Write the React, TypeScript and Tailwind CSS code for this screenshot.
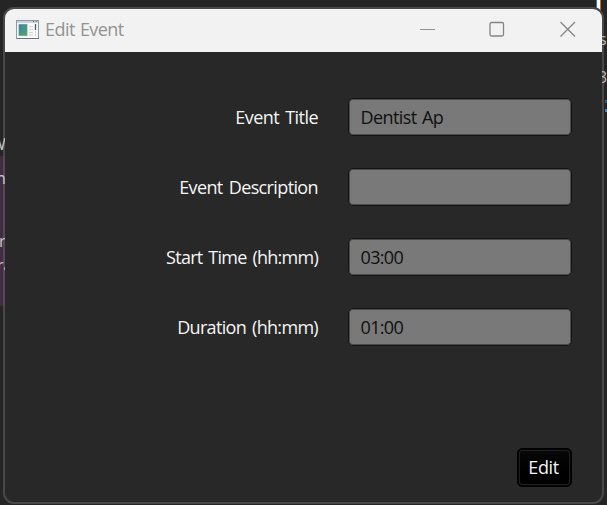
const fields = [
  { id: 'title', label: 'Event Title', value: 'Dentist Ap', tracking: 'tracking-[-0.55px]', valueTracking: 'tracking-[-0.6px] [word-spacing:1.5px]' },
  { id: 'description', label: 'Event Description', value: '', tracking: 'tracking-[-0.62px]', valueTracking: '' },
  { id: 'start', label: 'Start Time (hh:mm)', value: '03:00', tracking: 'tracking-[-0.75px]', valueTracking: 'tracking-[-0.65px]' },
  { id: 'duration', label: 'Duration (hh:mm)', value: '01:00', tracking: 'tracking-[-0.68px]', valueTracking: 'tracking-[-0.65px]' },
];

function AppIcon() {
  return (
    <svg width="24" height="20" viewBox="0 0 24 20" className="relative -top-px shrink-0">
      <defs>
        <linearGradient id="thumb" x1="0" y1="0" x2="1" y2="1">
          <stop offset="0" stopColor="#4479ae" />
          <stop offset="0.5" stopColor="#459688" />
          <stop offset="1" stopColor="#55a860" />
        </linearGradient>
      </defs>
      <rect x="0.5" y="0.5" width="22" height="18" fill="#f8f9fb" stroke="#8d99a8" />
      <rect x="1" y="1" width="21" height="2" fill="#cbd2da" />
      <path d="M17 1.5h1M19.5 1.5h1" stroke="#5c6875" />
      <path d="M1 18.5h22" stroke="#69727e" />
      <rect x="2.5" y="4" width="9" height="12" fill="url(#thumb)" stroke="#dce5e7" strokeWidth="0.5" />
      <path d="M13 6.5h4M13 9.5h4M13 12.5h4M13 15h4" stroke="#cfd2d6" />
      <path d="M19.5 4v6" stroke="#41655f" strokeWidth="1.3" />
      <path d="M19.5 11v5" stroke="#d8dadd" />
    </svg>
  );
}

function LeftEdge() {
  return (
    <div className="pointer-events-none absolute left-0 top-0 h-full w-[5px] overflow-hidden text-[16px] leading-4 text-[#c9c9c9]">
      <div className="absolute left-0 top-[156px] h-[150px] w-[5px] bg-[#412c42]" />
      <div className="absolute left-[3px] top-[156px] h-[150px] w-[2px] bg-[#55475a]" />
      <span className="absolute -left-[9px] top-[136px]">W</span>
      <span className="absolute -left-[4px] top-[170px]">n</span>
      <span className="absolute -left-[1px] top-[233px]">r</span>
      <span className="absolute -left-[3px] top-[257px]">ra</span>
    </div>
  );
}

function RightEdge() {
  return (
    <div className="pointer-events-none absolute left-[602px] top-0 h-full w-[5px] overflow-hidden text-[15px] leading-4 text-[#b9b9b9]">
      <span className="absolute -left-[3px] top-[31px] text-[16px]">s</span>
      <span className="absolute -left-[4px] top-[69px] text-[16px]">3</span>
      <div className="absolute left-[3px] top-[100px] h-[3px] w-[2px] bg-[#285784]" />
      <div className="absolute left-[3px] top-[109px] h-[3px] w-[2px] bg-[#3e82bd]" />
    </div>
  );
}

export default function App() {
  return (
    <div className="relative h-[505px] w-[607px] overflow-hidden bg-[#252525] pl-[3px] pt-[7px] font-['Open_Sans','Noto_Sans',sans-serif]">
      <div className="absolute left-[596px] top-0 h-[13px] w-[5px] border-l border-r border-l-[#3478ad] border-r-[#b96c35] bg-white" />
      <main className="relative flex h-[497px] w-[601px] flex-col overflow-hidden rounded-[11px] border-2 border-[#484848] bg-[#282828]">
        <header className="flex h-[43px] shrink-0 items-center bg-[#f2f2f2] pl-[11px] text-[#929292]">
          <AppIcon />
          <h1 className="ml-[5px] mt-[-3px] whitespace-nowrap text-[18px] leading-6 tracking-[-0.55px] [word-spacing:1px]">Edit Event</h1>
          <div className="-mt-[3px] ml-auto mr-[26px] flex items-center gap-[54px]">
            <button aria-label="Minimize"><svg width="16" height="16" className="block" fill="none" stroke="currentColor"><path d="M0 8.5h15" /></svg></button>
            <button aria-label="Maximize"><svg width="16" height="16" className="relative -left-px block" fill="none" stroke="#858585" strokeWidth="1.3"><rect x="1" y="1.5" width="13.5" height="13.5" rx="1.5" /></svg></button>
            <button aria-label="Close"><svg width="16" height="16" className="block" fill="none" stroke="#858585" strokeWidth="1.3"><path d="m.5 1 14.5 14.5M15 1 .5 15.5" /></svg></button>
          </div>
        </header>
        <form className="flex flex-1 flex-col pr-[30px] pt-[46px]" onSubmit={(e) => e.preventDefault()}>
          <div className="flex flex-col gap-8">
            {fields.map((field) => (
              <div key={field.id} className="flex h-[38px] items-center justify-end gap-[30px]">
                <label htmlFor={field.id} className={`whitespace-nowrap text-[18px] leading-6 text-[#f5f5f5] [word-spacing:2px] ${field.tracking}`}>{field.label}</label>
                <input id={field.id} defaultValue={field.value} className={`h-[38px] w-[224px] rounded-[5px] border border-[#151515] bg-[#797979] px-[11.5px] text-[18px] leading-6 text-[#101010] shadow-[inset_0_0_0_1px_#4a4a4a] outline-none ${field.valueTracking}`} />
              </div>
            ))}
          </div>
          <button className="mb-[15px] ml-auto mt-auto h-[39px] w-[55px] rounded-[5px] border border-black bg-linear-to-b from-[#0a0a0a] to-black pb-0.5 pr-[2px] text-[18px] leading-6 tracking-[-0.4px] text-[#f5f5f5] shadow-[inset_0_0_0_1px_#040404,inset_0_0_0_2px_#202020]">Edit</button>
        </form>
      </main>
      <LeftEdge />
      <RightEdge />
    </div>
  );
}
